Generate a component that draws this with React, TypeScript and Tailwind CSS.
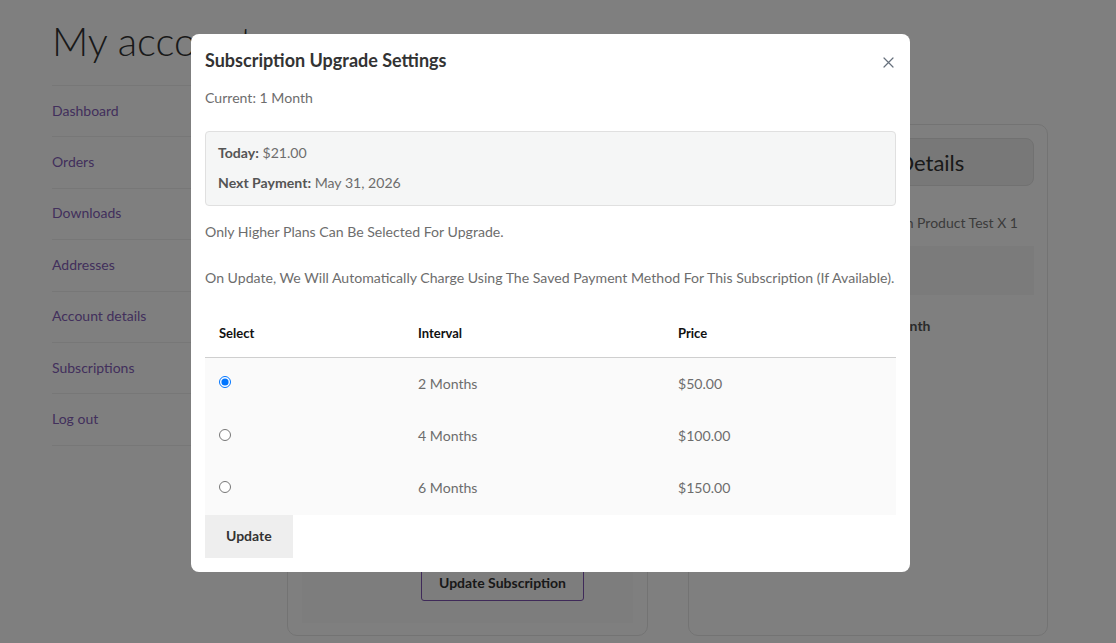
import { useState } from "react"

const navItems = ["Dashboard", "Orders", "Downloads", "Addresses", "Account details", "Subscriptions", "Log out"]

const plans = [
  { id: "2m", interval: "2 Months", price: "$50.00" },
  { id: "4m", interval: "4 Months", price: "$100.00" },
  { id: "6m", interval: "6 Months", price: "$150.00" },
]

function CloseIcon() {
  return (
    <svg width="11" height="11" viewBox="0 0 11 11" fill="none" stroke="#66707c" strokeWidth="1.2" strokeLinecap="round">
      <path d="M1 1 L10 10 M10 1 L1 10" />
    </svg>
  )
}

export default function App() {
  const [selected, setSelected] = useState("2m")

  return (
    <div className="relative h-[643px] overflow-hidden bg-white font-['Lato',sans-serif]">
      {/* account page behind the dialog */}
      <div className="px-[52px] pt-[17px]">
        <h1 className="text-[40px] font-light leading-[48px] text-[#333]">My account</h1>
        <div className="mt-[20px] flex">
          <nav className="w-[200px] border-t border-[#eeeeee]">
            {navItems.map((item) => (
              <div key={item} className="flex h-[51.4px] items-center border-b border-[#eeeeee] pb-[2px] text-[14px] text-[#8460b8]">
                {item}
              </div>
            ))}
          </nav>

          <div className="ml-[35px] mt-[39px] flex gap-[40px]">
            <div className="flex h-[512px] w-[361px] flex-col rounded-[10px] border border-[#e6e6e6] px-[14px] pb-[12px] pt-[13px]">
              <div className="flex flex-1 items-end justify-end bg-[#fafafa] pb-[22px] pr-[49px]">
                <button className="h-[38px] w-[163px] rounded-[3px] border border-[#7f54b3] text-[14px] font-bold text-[#333]">
                  Update Subscription
                </button>
              </div>
            </div>

            <div className="h-[512px] w-[360px] rounded-[10px] border border-[#e6e6e6] px-[13px] pt-[13px]">
              <div className="flex h-[48px] items-center justify-center rounded-[8px] border border-[#e2e2e2] bg-[#f0f0f0] text-[22px] text-[#333]">
                Subscription Details
              </div>
              <div className="mt-[12px] text-[14px] text-[#777]">
                <div className="flex h-[48px] items-center justify-end pr-[16px]">Simple Subscription Product Test X 1</div>
                <div className="h-[49px] bg-[#f6f6f6]"></div>
                <div className="grid h-[60px] grid-cols-2 items-center px-[14px] font-bold text-[#555]">
                  <span>Interval</span>
                  <span className="pl-[9px]">1 Month</span>
                </div>
              </div>
            </div>
          </div>
        </div>
      </div>

      {/* overlay */}
      <div className="absolute inset-0 bg-black/50"></div>

      {/* dialog */}
      <div className="absolute left-[191px] top-[34px] w-[719px] rounded-[8px] bg-white px-[14px] pb-[14px] pt-[14px] text-[14.1px] leading-[20px] text-[#6d6d6d]">
        <div className="flex items-center justify-between">
          <h2 className="text-[18px] font-bold leading-[24px] text-[#333]">Subscription Upgrade Settings</h2>
          <button className="mr-[1px] mt-[4px] flex h-[14px] w-[14px] items-center justify-center">
            <CloseIcon />
          </button>
        </div>

        <p className="mt-[16px]">Current: 1 Month</p>

        <div className="mt-[23px] rounded-[4px] border border-[#e0e0e0] bg-[#f5f6f6] px-[12px] pb-[12px] pt-[11px]">
          <p>
            <span className="font-bold text-[#555]">Today:</span> $21.00
          </p>
          <p className="mt-[10px]">
            <span className="font-bold text-[#555]">Next Payment:</span> May 31, 2026
          </p>
        </div>

        <p className="mt-[16px]">Only Higher Plans Can Be Selected For Upgrade.</p>
        <p className="mt-[26px]">On Update, We Will Automatically Charge Using The Saved Payment Method For This Subscription (If Available).</p>

        <table className="mt-[21px] w-full table-fixed border-collapse">
          <colgroup>
            <col className="w-[199px]" />
            <col className="w-[260px]" />
            <col />
          </colgroup>
          <thead>
            <tr className="border-b border-[#cfcfcf]">
              <th className="px-[14px] py-[14px] text-left text-[13px] font-bold text-[#111]">Select</th>
              <th className="px-[14px] py-[14px] text-left text-[13px] font-bold text-[#111]">Interval</th>
              <th className="px-[14px] py-[14px] text-left text-[13px] font-bold text-[#111]">Price</th>
            </tr>
          </thead>
          <tbody className="bg-[#fafafa]">
            {plans.map((plan) => (
              <tr key={plan.id} className="h-[52.4px]">
                <td className="px-[14px]">
                  <input
                    type="radio"
                    name="plan"
                    checked={selected === plan.id}
                    onChange={() => setSelected(plan.id)}
                    className="m-0 -mt-[3px] block h-3 w-3 accent-[#0075ff]"
                  />
                </td>
                <td className="px-[14px]">{plan.interval}</td>
                <td className="px-[14px]">{plan.price}</td>
              </tr>
            ))}
          </tbody>
        </table>

        <button className="bg-[#eeeeee] px-[21px] py-[11.5px] text-[14px] font-bold leading-[20px] text-[#333]">Update</button>
      </div>
    </div>
  )
}
